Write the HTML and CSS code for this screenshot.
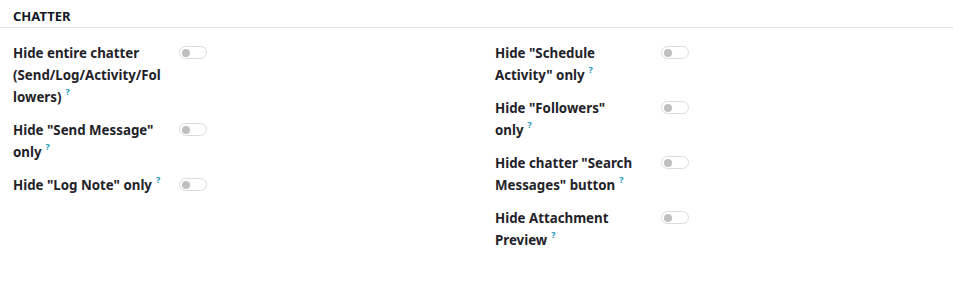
FILE: index.html
```html
<!DOCTYPE html>
<html>
<head>
<meta charset="utf-8">
<link rel="stylesheet" href="styles.css">
</head>
<body>
<div class="settings">
  <h3 class="section-title">Chatter</h3>
  <div class="grid">
    <div class="col">
      <div class="setting">
        <div class="label">Hide entire chatter<br>(Send/Log/Activity/Fol<br>lowers)<sup class="help">?</sup></div>
        <div class="toggle"><span class="knob"></span></div>
      </div>
      <div class="setting">
        <div class="label">Hide "Send Message"<br>only<sup class="help">?</sup></div>
        <div class="toggle"><span class="knob"></span></div>
      </div>
      <div class="setting">
        <div class="label">Hide "Log Note" only<sup class="help">?</sup></div>
        <div class="toggle"><span class="knob"></span></div>
      </div>
    </div>
    <div class="col">
      <div class="setting">
        <div class="label">Hide "Schedule<br>Activity" only<sup class="help">?</sup></div>
        <div class="toggle"><span class="knob"></span></div>
      </div>
      <div class="setting">
        <div class="label">Hide "Followers"<br>only<sup class="help">?</sup></div>
        <div class="toggle"><span class="knob"></span></div>
      </div>
      <div class="setting">
        <div class="label">Hide chatter "Search<br>Messages" button<sup class="help">?</sup></div>
        <div class="toggle"><span class="knob"></span></div>
      </div>
      <div class="setting">
        <div class="label">Hide Attachment<br>Preview<sup class="help">?</sup></div>
        <div class="toggle"><span class="knob"></span></div>
      </div>
    </div>
  </div>
</div>
</body>
</html>
```
FILE: styles.css
```css
html, body {
  margin: 0;
  padding: 0;
  background: #ffffff;
}
body {
  font-family: "Noto Sans", "DejaVu Sans", sans-serif;
  color: #1f2329;
}
.settings {
  padding-top: 7px;
}
.section-title {
  margin: 0;
  padding: 0 13px 1px;
  font-size: 13px;
  font-weight: 700;
  text-transform: uppercase;
  line-height: 19px;
  border-bottom: 1px solid #e2e2e2;
  color: #111827;
}
.grid {
  display: grid;
  grid-template-columns: 482px 1fr;
  padding: 14px 13px 0;
}
.col {
  display: flex;
  flex-direction: column;
  gap: 11px;
}
.setting {
  display: flex;
  align-items: flex-start;
}
.label {
  width: 166px;
  font-size: 13.3px;
  font-weight: 700;
  line-height: 22px;
  white-space: nowrap;
}
.help {
  color: #1595bd;
  font-size: 9px;
  font-weight: 700;
  line-height: 0;
  margin-left: 4px;
  vertical-align: baseline;
  position: relative;
  top: -7px;
}
.toggle {
  box-sizing: border-box;
  width: 28px;
  height: 13px;
  margin-top: 4px;
  border: 1px solid #dcdcdc;
  border-radius: 7px;
  background: #fff;
  display: flex;
  align-items: center;
  padding: 0 2px;
}
.knob {
  width: 8px;
  height: 8px;
  border-radius: 50%;
  background: #c0c0c0;
}
```
